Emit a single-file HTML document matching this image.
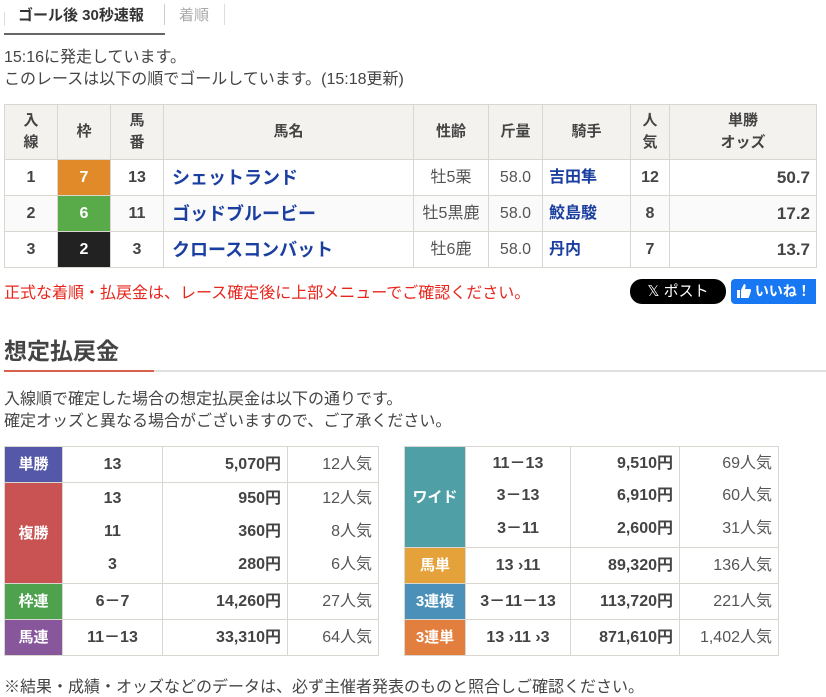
<!DOCTYPE html>
<html><head><meta charset="utf-8"><style>
*{box-sizing:border-box;margin:0;padding:0}
body{width:826px;height:696px;background:#fff;font-family:"Liberation Sans","Noto Sans CJK JP",sans-serif;color:#444;font-size:16px;position:relative;overflow:hidden}
.a{position:absolute;white-space:nowrap}
table{border-collapse:collapse;position:absolute;table-layout:fixed}
td,th{border:1px solid #d9d7cf;text-align:center;font-weight:bold;padding:0;line-height:1;white-space:nowrap}
th{background:#f3f2ee;font-size:15px;line-height:22px;color:#444}
.mt td{height:36px;font-size:16px}
.nm{text-align:left;padding-left:8px;color:#1a3fa0;font-size:18px!important}
.jk{text-align:left;padding-left:6px;color:#1a3fa0}
.n{font-weight:normal;color:#555}
.r{text-align:right;padding-right:6px}
.lb{color:#fff;font-size:15px!important}
.pt td{font-size:16px}
.pn{font-weight:normal!important;text-align:right;padding-right:6px;color:#555}
.mid td{border-top:0;border-bottom:0}
.top td{border-bottom:0}
.bot td{border-top:0}
</style></head><body>
<div class="a" style="left:4px;top:12px;width:1px;height:14px;background:#ddd"></div>
<div class="a" style="left:18px;top:4px;font-size:15px;font-weight:bold;color:#333">ゴール後 30秒速報</div>
<div class="a" style="left:164px;top:4px;width:1px;height:21px;background:#ccc"></div>
<div class="a" style="left:179px;top:4px;font-size:15px;color:#aaa">着順</div>
<div class="a" style="left:224px;top:4px;width:1px;height:21px;background:#ddd"></div>
<div class="a" style="left:4px;top:33px;width:161px;height:2px;background:#666"></div>
<div class="a" style="left:4px;top:47px;line-height:22px;font-size:16px">15:16に発走しています。<br>このレースは以下の順でゴールしています。(15:18更新)</div>

<table class="mt" style="left:4px;top:104px;width:812px">
<colgroup><col style="width:53px"><col style="width:53px"><col style="width:53px"><col style="width:250px"><col style="width:75px"><col style="width:54px"><col style="width:88px"><col style="width:39px"><col style="width:147px"></colgroup>
<tr style="height:55px"><th>入<br>線</th><th>枠</th><th>馬<br>番</th><th>馬名</th><th>性齢</th><th>斤量</th><th>騎手</th><th>人<br>気</th><th>単勝<br>オッズ</th></tr>
<tr><td>1</td><td style="background:#e08a2a;color:#fff">7</td><td>13</td><td class="nm">シェットランド</td><td class="n">牡5栗</td><td class="n">58.0</td><td class="jk">吉田隼</td><td>12</td><td class="r" style="font-size:17px">50.7</td></tr>
<tr style="background:#fafafa"><td>2</td><td style="background:#58ab48;color:#fff">6</td><td>11</td><td class="nm">ゴッドブルービー</td><td class="n">牡5黒鹿</td><td class="n">58.0</td><td class="jk">鮫島駿</td><td>8</td><td class="r" style="font-size:17px">17.2</td></tr>
<tr><td>3</td><td style="background:#222;color:#fff">2</td><td>3</td><td class="nm">クロースコンバット</td><td class="n">牡6鹿</td><td class="n">58.0</td><td class="jk">丹内</td><td>7</td><td class="r" style="font-size:17px">13.7</td></tr>
</table>

<div class="a" style="left:4px;top:279px;color:#e8251c;font-size:16px">正式な着順・払戻金は、レース確定後に上部メニューでご確認ください。</div>
<div class="a" style="left:630px;top:279px;width:96px;height:25px;background:#000;border-radius:12px;color:#fff;font-size:15px;line-height:25px;text-align:center">𝕏 ポスト</div>
<div class="a" style="left:731px;top:279px;width:85px;height:25px;background:#1877f2;border-radius:4px 0 0 4px;color:#fff;font-size:14px;font-weight:bold;line-height:25px;padding-left:6px;overflow:hidden">
<svg width="14" height="14" viewBox="0 0 14 14" style="vertical-align:-2px"><path d="M0 6h3v8H0zM4 6l3-6c2 0 2 2 1 5h5c1 0 1 1 1 2l-2 6c0 1-1 1-2 1H4z" fill="#fff"/></svg> いいね！</div>

<div class="a" style="left:4px;top:332px;font-size:23px;font-weight:bold;color:#444">想定払戻金</div>
<div class="a" style="left:4px;top:370px;width:822px;height:2px;background:#e0e0e0"></div>
<div class="a" style="left:4px;top:370px;width:150px;height:2px;background:#d9604a"></div>
<div class="a" style="left:4px;top:389px;line-height:22px;font-size:16px">入線順で確定した場合の想定払戻金は以下の通りです。<br>確定オッズと異なる場合がございますので、ご了承ください。</div>

<table class="pt" style="left:4px;top:446px;width:374px">
<colgroup><col style="width:58px"><col style="width:100px"><col style="width:125px"><col style="width:91px"></colgroup>
<tr style="height:36px"><td class="lb" style="background:#5558a8">単勝</td><td>13</td><td class="r">5,070円</td><td class="pn">12人気</td></tr>
<tr class="top" style="height:33px"><td class="lb" rowspan="3" style="background:#c95252">複勝</td><td>13</td><td class="r">950円</td><td class="pn">12人気</td></tr>
<tr class="mid" style="height:32px"><td>11</td><td class="r">360円</td><td class="pn">8人気</td></tr>
<tr class="bot" style="height:36px"><td>3</td><td class="r">280円</td><td class="pn">6人気</td></tr>
<tr style="height:36px"><td class="lb" style="background:#4ea24e">枠連</td><td>6－7</td><td class="r">14,260円</td><td class="pn">27人気</td></tr>
<tr style="height:36px"><td class="lb" style="background:#88579b">馬連</td><td>11－13</td><td class="r">33,310円</td><td class="pn">64人気</td></tr>
</table>

<table class="pt" style="left:404px;top:446px;width:374px">
<colgroup><col style="width:61px"><col style="width:105px"><col style="width:109px"><col style="width:99px"></colgroup>
<tr class="top" style="height:34px"><td class="lb" rowspan="3" style="background:#4e9fa6">ワイド</td><td>11－13</td><td class="r">9,510円</td><td class="pn">69人気</td></tr>
<tr class="mid" style="height:31px"><td>3－13</td><td class="r">6,910円</td><td class="pn">60人気</td></tr>
<tr class="bot" style="height:36px"><td>3－11</td><td class="r">2,600円</td><td class="pn">31人気</td></tr>
<tr style="height:36px"><td class="lb" style="background:#e6a23a">馬単</td><td>13 ›11</td><td class="r">89,320円</td><td class="pn">136人気</td></tr>
<tr style="height:36px"><td class="lb" style="background:#4a90b8">3連複</td><td>3－11－13</td><td class="r">113,720円</td><td class="pn">221人気</td></tr>
<tr style="height:36px"><td class="lb" style="background:#e37f3e">3連単</td><td>13 ›11 ›3</td><td class="r">871,610円</td><td class="pn">1,402人気</td></tr>
</table>

<div class="a" style="left:4px;top:673px;font-size:16px">※結果・成績・オッズなどのデータは、必ず主催者発表のものと照合しご確認ください。</div>
</body></html>
